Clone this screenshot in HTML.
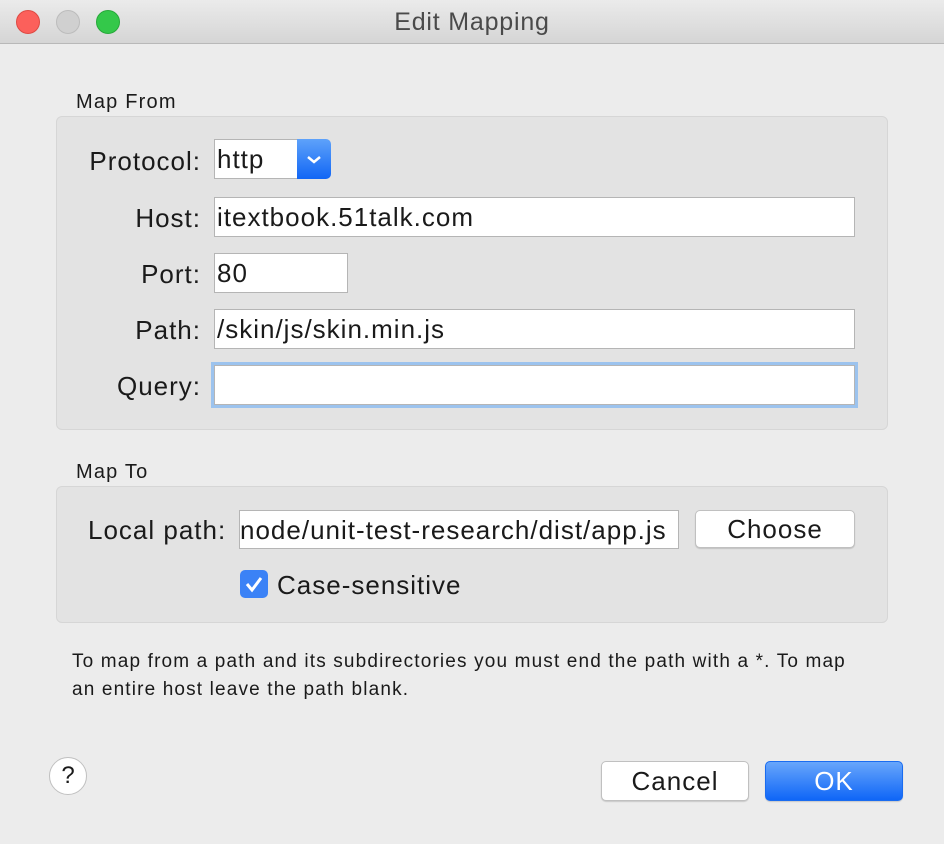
<!DOCTYPE html>
<html><head><style>
*{box-sizing:border-box;margin:0;padding:0}
body{width:944px;height:844px;background:#ececec;font-family:"Liberation Sans",sans-serif;color:#1a1a1a;position:relative;overflow:hidden}
.a{position:absolute}
.tb{left:0;top:0;width:944px;height:44px;background:linear-gradient(#ebebeb,#d5d5d5);border-bottom:1px solid #b8b8b8}
.dot{width:24px;height:24px;border-radius:50%;top:10px}
.title{top:0;left:0;width:944px;line-height:44px;text-align:center;font-size:25px;letter-spacing:.8px;color:#4a4a4a}
.box{background:#e3e3e3;border:1px solid #d6d6d6;border-radius:6px}
.t{font-size:26px;letter-spacing:1px}
.lbl{font-size:26px;letter-spacing:1px;text-align:right;width:201px;left:0}
.f{background:#fff;border:1px solid #b5b5b5;font-size:26px;letter-spacing:1px;padding-left:2px;line-height:38px;white-space:nowrap;overflow:hidden}
.sec{font-size:20px;letter-spacing:1.2px;left:76px}
.btn{background:#fff;border:1px solid #c0c0c0;border-radius:5px;font-size:26px;letter-spacing:1px;text-align:center;box-shadow:0 1px 1px rgba(0,0,0,.15)}
</style></head><body>
<div class="a tb"></div>
<div class="a dot" style="left:16px;background:#fc605b;border:1px solid #de4a43"></div>
<div class="a dot" style="left:56px;background:#d0d0d0;border:1px solid #bcbcbc"></div>
<div class="a dot" style="left:96px;background:#34c84a;border:1px solid #27a93a"></div>
<div class="a title">Edit Mapping</div>

<div class="a sec" style="top:91px">Map From</div>
<div class="a box" style="left:56px;top:116px;width:832px;height:314px"></div>
<div class="a lbl" style="top:146px">Protocol:</div>
<div class="a f" style="left:214px;top:139px;width:90px;height:40px;border-right:none">http</div>
<div class="a" style="left:297px;top:139px;width:34px;height:40px;background:linear-gradient(#5ea2fa,#1166f5);border-radius:0 5px 5px 0"><svg width="34" height="40"><path d="M11 18l6 5 6-5" stroke="#fff" stroke-width="2.5" fill="none"/></svg></div>
<div class="a lbl" style="top:203px">Host:</div>
<div class="a f" style="left:214px;top:197px;width:641px;height:40px">itextbook.51talk.com</div>
<div class="a lbl" style="top:259px">Port:</div>
<div class="a f" style="left:214px;top:253px;width:134px;height:40px">80</div>
<div class="a lbl" style="top:315px">Path:</div>
<div class="a f" style="left:214px;top:309px;width:641px;height:40px">/skin/js/skin.min.js</div>
<div class="a lbl" style="top:371px">Query:</div>
<div class="a f" style="left:214px;top:365px;width:641px;height:40px;box-shadow:0 0 0 3px #9cc3ee"></div>

<div class="a sec" style="top:461px">Map To</div>
<div class="a box" style="left:56px;top:486px;width:832px;height:137px"></div>
<div class="a t" style="left:88px;top:515px">Local path:</div>
<div class="a f" style="left:239px;top:510px;width:440px;height:39px;padding-left:0">node/unit-test-research/dist/app.js</div>
<div class="a btn" style="left:695px;top:510px;width:160px;height:38px;line-height:36px">Choose</div>
<div class="a" style="left:240px;top:570px;width:28px;height:28px;border-radius:5px;background:#3b82f6"><svg width="28" height="28"><path d="M7 14l5 6 9-12" stroke="#fff" stroke-width="3" fill="none"/></svg></div>
<div class="a t" style="left:277px;top:570px">Case-sensitive</div>

<div class="a" style="left:72px;top:648px;font-size:19px;letter-spacing:1.15px;line-height:28px;width:860px">To map from a path and its subdirectories you must end the path with a *. To map<br>an entire host leave the path blank.</div>

<div class="a" style="left:49px;top:757px;width:38px;height:38px;border-radius:50%;background:#fff;border:1px solid #c0c0c0;text-align:center;line-height:36px;font-size:24px">?</div>
<div class="a btn" style="left:601px;top:761px;width:148px;height:40px;line-height:38px">Cancel</div>
<div class="a btn" style="left:765px;top:761px;width:138px;height:40px;line-height:38px;background:linear-gradient(#68a6fb,#0f66f7);border-color:#1a6cf0;color:#fff">OK</div>
</body></html>
